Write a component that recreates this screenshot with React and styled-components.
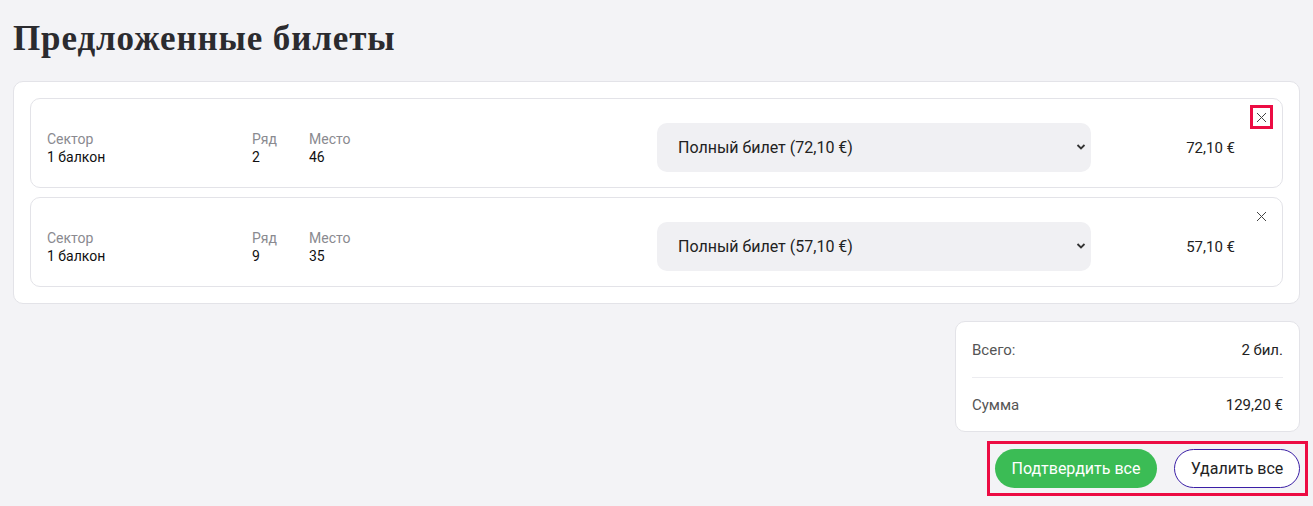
import React from "react";
import styled, { createGlobalStyle } from "styled-components";

const GlobalStyle = createGlobalStyle`
  body {
    margin: 0;
    background: #f3f3f6;
    font-family: Roboto, "Liberation Sans", sans-serif;
    color: #222;
  }
`;

const tickets = [
  { id: 1, sector: "1 балкон", row: "2", seat: "46", price: "72,10 €", focused: true },
  { id: 2, sector: "1 балкон", row: "9", seat: "35", price: "57,10 €", focused: false },
];

const Page = styled.div`
  padding: 0 13px 12px;
`;

const Title = styled.h1`
  font-family: "Liberation Serif", "DejaVu Serif", serif;
  font-weight: bold;
  font-size: 35px;
  line-height: 40px;
  color: #2b2b2f;
  margin: 0;
  padding: 19px 0 22px;
  letter-spacing: 0.9px;
`;

const Panel = styled.div`
  background: #fff;
  border: 1px solid #e3e3e8;
  border-radius: 10px;
  padding: 16px;
  display: flex;
  flex-direction: column;
  gap: 9px;
`;

const Card = styled.div`
  position: relative;
  border: 1px solid #e3e3e8;
  border-radius: 10px;
  padding: 24px 47px 15px 16px;
  display: grid;
  grid-template-columns: 205px 57px 1fr 434px 144px;
  align-items: center;
  height: 49px;
`;

const Field = styled.div`
  display: flex;
  flex-direction: column;
  font-size: 14px;
  line-height: 18px;
`;

const Label = styled.span`
  color: #8a8a90;
`;

const Value = styled.span`
  color: #111;
`;

const SelectWrap = styled.div`
  position: relative;
  height: 49px;
`;

const Select = styled.select`
  appearance: none;
  width: 100%;
  height: 100%;
  border: none;
  border-radius: 10px;
  background: #f0f0f3;
  padding: 0 40px 0 21px;
  font-family: Roboto, "Liberation Sans", sans-serif;
  font-size: 16px;
  color: #222;
  outline: none;
`;

const Chevron = styled.svg`
  position: absolute;
  right: 5px;
  top: 20px;
  pointer-events: none;
`;

const Price = styled.div`
  text-align: right;
  font-size: 15px;
  color: #222;
`;

const CloseButton = styled.button`
  position: absolute;
  top: 9px;
  right: 12px;
  width: 17px;
  height: 18px;
  padding: 0;
  border: none;
  background: transparent;
  display: flex;
  align-items: center;
  justify-content: center;
  outline: ${(p) => (p.$focused ? "3px solid #ec0c43" : "none")};
  cursor: pointer;
`;

const Bottom = styled.div`
  display: flex;
  flex-direction: column;
  align-items: flex-end;
  gap: 17px;
  padding-top: 17px;
`;

const Summary = styled.div`
  width: 311px;
  background: #fff;
  border: 1px solid #e3e3e8;
  border-radius: 10px;
  padding: 0 16px 0 16px;
`;

const SummaryRow = styled.div`
  display: flex;
  justify-content: space-between;
  align-items: center;
  height: ${(p) => p.$h}px;
  font-size: 15px;
  border-top: ${(p) => (p.$divider ? "1px solid #ececf0" : "none")};
`;

const SummaryLabel = styled.span`
  color: #555;
`;

const SummaryValue = styled.span`
  color: #222;
`;

const Actions = styled.div`
  display: flex;
  gap: 17px;
  outline: 3px solid #ec0c43;
  outline-offset: 5px;
`;

const Button = styled.button`
  height: 39px;
  padding: 0;
  border-radius: 20px;
  font-family: Roboto, "Liberation Sans", sans-serif;
  font-size: 16px;
  font-weight: 400;
  cursor: pointer;
  border: ${(p) => (p.$primary ? "none" : "1px solid #3b1fa6")};
  background: ${(p) => (p.$primary ? "#3bbc55" : "#fff")};
  color: ${(p) => (p.$primary ? "#fff" : "#222")};
  width: ${(p) => p.$w}px;
`;

const CrossIcon = () => (
  <svg width="11" height="11" viewBox="0 0 11 11">
    <path d="M1 1 L10 10 M10 1 L1 10" stroke="#444" strokeWidth="1" fill="none" />
  </svg>
);

export default function App() {
  return (
    <Page>
      <GlobalStyle />
      <Title>Предложенные билеты</Title>
      <Panel>
        {tickets.map((t) => (
          <Card key={t.id}>
            <Field>
              <Label>Сектор</Label>
              <Value>{t.sector}</Value>
            </Field>
            <Field>
              <Label>Ряд</Label>
              <Value>{t.row}</Value>
            </Field>
            <Field>
              <Label>Место</Label>
              <Value>{t.seat}</Value>
            </Field>
            <SelectWrap>
              <Select defaultValue="full">
                <option value="full">Полный билет ({t.price})</option>
              </Select>
              <Chevron width="10" height="8" viewBox="0 0 10 8">
                <path d="M1.5 2 L5 5.5 L8.5 2" stroke="#333" strokeWidth="1.8" fill="none" />
              </Chevron>
            </SelectWrap>
            <Price>{t.price}</Price>
            <CloseButton $focused={t.focused} aria-label="Удалить">
              <CrossIcon />
            </CloseButton>
          </Card>
        ))}
      </Panel>
      <Bottom>
        <Summary>
          <SummaryRow $h={55}>
            <SummaryLabel>Всего:</SummaryLabel>
            <SummaryValue>2 бил.</SummaryValue>
          </SummaryRow>
          <SummaryRow $h={53} $divider>
            <SummaryLabel>Сумма</SummaryLabel>
            <SummaryValue>129,20 €</SummaryValue>
          </SummaryRow>
        </Summary>
        <Actions>
          <Button $primary $w={162}>Подтвердить все</Button>
          <Button $w={126}>Удалить все</Button>
        </Actions>
      </Bottom>
    </Page>
  );
}
